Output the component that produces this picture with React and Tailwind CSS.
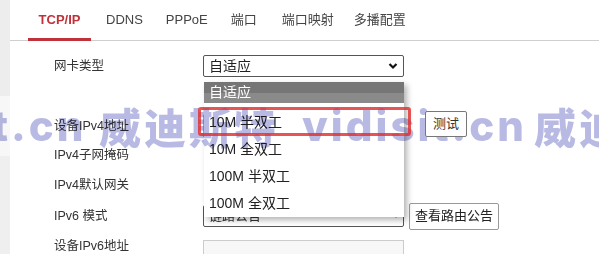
export default function App() {
  const font = { fontFamily: '"Liberation Sans", "Noto Sans CJK SC", sans-serif' };
  const tabs = ["DDNS", "PPPoE", "端口", "端口映射", "多播配置"];
  const tabMl = ["ml-[15px]", "ml-[23px]", "ml-[23px]", "ml-[25px]", "ml-[20px]"];
  const wmLatin = { fontFamily: 'Inter, "Liberation Sans", sans-serif' };
  const wmCjk = { fontFamily: '"Noto Sans CJK SC", sans-serif' };
  return (
    <div className="relative isolate w-[599px] h-[254px] overflow-hidden bg-white flex text-[#333]" style={font}>
      <div className="w-[10px] h-full shrink-0 flex flex-col">
        <div className="h-[96px] bg-[#ededed]" />
        <div className="h-[60px] bg-[#f7f7f7]" />
        <div className="flex-1 bg-[#efefef]" />
      </div>
      <div className="flex-1 flex flex-col">
        {/* tabs */}
        <div className="h-[41px] border-b border-[#cfcfcf] flex items-start pt-[10px] text-[13px]">
          <div className="ml-[18px] w-[63px] h-[31px] border-b-[3px] border-[#c0323a] flex justify-center">
            <span className="text-[#c0323a] font-bold">TCP/IP</span>
          </div>
          {tabs.map((t, i) => (
            <span key={t} className={`${tabMl[i]} text-[#444]`}>{t}</span>
          ))}
        </div>
        {/* form */}
        <div className="pt-[10px] pl-[44px] text-[12.5px] flex flex-col">
          <div className="h-[30px] flex items-center">
            <span className="w-[149px]">网卡类型</span>
            <div className="w-[201px] h-[22px] border border-[#555] rounded-[2px] flex items-center justify-between px-[5px] text-[14px] text-[#222]">
              <span>自适应</span>
              <svg width="10" height="8" viewBox="0 0 10 8"><path d="M1.5 2 L5 5.5 L8.5 2" stroke="#111" strokeWidth="2.2" fill="none" /></svg>
            </div>
          </div>
          <div className="h-[30px]" />
          <div className="h-[30px] flex items-center">
            <span className="w-[149px]">设备IPv4地址</span>
            <div className="w-[201px] h-[22px] border border-[#bbb]" />
            <button className="relative z-20 ml-[21px] w-[42px] h-[26px] border border-[#777] rounded-[2px] text-[13px] bg-white mt-[-4px]">测试</button>
          </div>
          <div className="h-[29px] flex items-center"><span>IPv4子网掩码</span></div>
          <div className="h-[31px] flex items-center"><span>IPv4默认网关</span></div>
          <div className="h-[30px] flex items-center">
            <span className="w-[149px]">IPv6 模式</span>
            <div className="w-[201px] h-[22px] border border-[#555] rounded-[2px] flex items-center justify-between px-[5px] text-[13px]">
              <span>链路公告</span>
              <span className="text-[8px]">▾</span>
            </div>
            <button className="ml-[5px] w-[90px] h-[27px] border border-[#999] rounded-[2px] text-[13px] bg-white text-[#222]">查看路由公告</button>
          </div>
          <div className="h-[30px] flex items-center">
            <span className="w-[149px]">设备IPv6地址</span>
            <div className="w-[201px] h-[22px] border border-[#ccc] bg-[#f7f7f7] mt-[10px]" />
          </div>
        </div>
      </div>

      {/* dropdown overlay */}
      <div className="absolute z-0 left-[204px] top-[82px] w-[200px] h-[135px] bg-white shadow-[3px_3px_6px_rgba(0,0,0,0.3)] text-[14px] text-[#222] flex flex-col">
        <div className="h-[21px] flex items-center px-[5px] text-white bg-[linear-gradient(#767676_0%,#767676_50%,#8a8a8a_50%,#8a8a8a_100%)]">自适应</div>
        <div className="pt-[6px] flex flex-col">
          {["10M 半双工", "10M 全双工", "100M 半双工", "100M 全双工"].map((t) => (
            <div key={t} className="h-[27px] flex items-center px-[5px]">{t}</div>
          ))}
        </div>
      </div>

      {/* watermark */}
      <div className="absolute z-10 left-0 top-[96px] w-full h-[60px] mix-blend-multiply pointer-events-none text-[42px] text-[#b9bae4] leading-[60px] whitespace-nowrap">
        <span className="absolute left-[-8px] top-0 tracking-[3px] font-extrabold" style={wmLatin}>t.cn</span>
        <span className="absolute left-[99px] top-0 tracking-[3px] font-black" style={wmCjk}>威迪斯特</span>
        <span className="absolute left-[302px] top-0 tracking-[3px] font-extrabold" style={wmLatin}>vidisit.cn</span>
        <span className="absolute left-[534px] top-0 tracking-[3px] font-black" style={wmCjk}>威迪斯特</span>
      </div>

      {/* red highlight box */}
      <div className="absolute z-20 left-[198px] top-[107px] w-[213px] h-[29px] border-[3px] border-[#e02a2a]/80 rounded-[3px] pointer-events-none" />
    </div>
  );
}
